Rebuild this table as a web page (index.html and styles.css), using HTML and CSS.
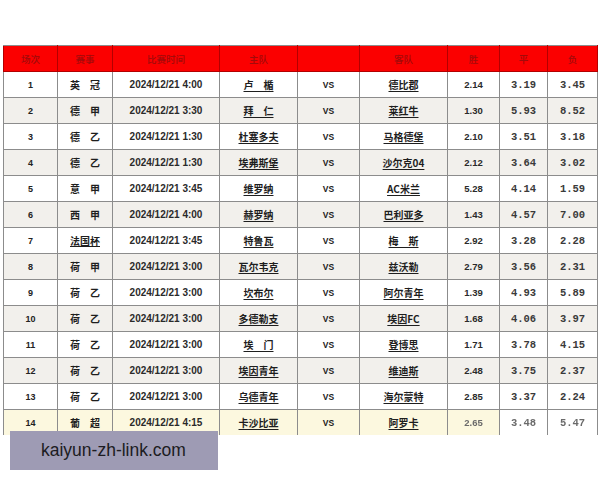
FILE: index.html
```html
<!DOCTYPE html>
<html lang="zh-CN">
<head>
<meta charset="utf-8">
<title>赛事赔率</title>
<link rel="stylesheet" href="styles.css">
</head>
<body>
<div class="page">
  <div class="sheet">
    <table class="odds">
      <colgroup>
        <col class="c-no"><col class="c-lg"><col class="c-dt"><col class="c-home"><col class="c-vs"><col class="c-away"><col class="c-w"><col class="c-d"><col class="c-l">
      </colgroup>
      <thead>
        <tr class="head">
          <th>场次</th><th>赛事</th><th>比赛时间</th><th>主队</th><th></th><th>客队</th><th>胜</th><th>平</th><th>负</th>
        </tr>
      </thead>
      <tbody>
        <tr><td class="no">1</td><td class="lg">英　冠</td><td class="dt">2024/12/21 4:00</td><td class="tm">卢　楯</td><td class="vs">VS</td><td class="tm">德比郡</td><td class="w">2.14</td><td class="mono">3.19</td><td class="mono">3.45</td></tr>
        <tr class="alt"><td class="no">2</td><td class="lg">德　甲</td><td class="dt">2024/12/21 3:30</td><td class="tm">拜　仁</td><td class="vs">VS</td><td class="tm">莱红牛</td><td class="w">1.30</td><td class="mono">5.93</td><td class="mono">8.52</td></tr>
        <tr><td class="no">3</td><td class="lg">德　乙</td><td class="dt">2024/12/21 1:30</td><td class="tm">杜塞多夫</td><td class="vs">VS</td><td class="tm">马格德堡</td><td class="w">2.10</td><td class="mono">3.51</td><td class="mono">3.18</td></tr>
        <tr class="alt"><td class="no">4</td><td class="lg">德　乙</td><td class="dt">2024/12/21 1:30</td><td class="tm">埃弗斯堡</td><td class="vs">VS</td><td class="tm">沙尔克04</td><td class="w">2.12</td><td class="mono">3.64</td><td class="mono">3.02</td></tr>
        <tr><td class="no">5</td><td class="lg">意　甲</td><td class="dt">2024/12/21 3:45</td><td class="tm">维罗纳</td><td class="vs">VS</td><td class="tm">AC米兰</td><td class="w">5.28</td><td class="mono">4.14</td><td class="mono">1.59</td></tr>
        <tr class="alt"><td class="no">6</td><td class="lg">西　甲</td><td class="dt">2024/12/21 4:00</td><td class="tm">赫罗纳</td><td class="vs">VS</td><td class="tm">巴利亚多</td><td class="w">1.43</td><td class="mono">4.57</td><td class="mono">7.00</td></tr>
        <tr><td class="no">7</td><td class="lg u">法国杯</td><td class="dt">2024/12/21 3:45</td><td class="tm">特鲁瓦</td><td class="vs">VS</td><td class="tm">梅　斯</td><td class="w">2.92</td><td class="mono">3.28</td><td class="mono">2.28</td></tr>
        <tr class="alt"><td class="no">8</td><td class="lg">荷　甲</td><td class="dt">2024/12/21 3:00</td><td class="tm">瓦尔韦克</td><td class="vs">VS</td><td class="tm">兹沃勒</td><td class="w">2.79</td><td class="mono">3.56</td><td class="mono">2.31</td></tr>
        <tr><td class="no">9</td><td class="lg">荷　乙</td><td class="dt">2024/12/21 3:00</td><td class="tm">坎布尔</td><td class="vs">VS</td><td class="tm">阿尔青年</td><td class="w">1.39</td><td class="mono">4.93</td><td class="mono">5.89</td></tr>
        <tr class="alt"><td class="no">10</td><td class="lg">荷　乙</td><td class="dt">2024/12/21 3:00</td><td class="tm">多德勒支</td><td class="vs">VS</td><td class="tm">埃因FC</td><td class="w">1.68</td><td class="mono">4.06</td><td class="mono">3.97</td></tr>
        <tr><td class="no">11</td><td class="lg">荷　乙</td><td class="dt">2024/12/21 3:00</td><td class="tm">埃　门</td><td class="vs">VS</td><td class="tm">登博思</td><td class="w">1.71</td><td class="mono">3.78</td><td class="mono">4.15</td></tr>
        <tr class="alt"><td class="no">12</td><td class="lg">荷　乙</td><td class="dt">2024/12/21 3:00</td><td class="tm">埃因青年</td><td class="vs">VS</td><td class="tm">维迪斯</td><td class="w">2.48</td><td class="mono">3.75</td><td class="mono">2.37</td></tr>
        <tr><td class="no">13</td><td class="lg">荷　乙</td><td class="dt">2024/12/21 3:00</td><td class="tm">乌德青年</td><td class="vs">VS</td><td class="tm">海尔蒙特</td><td class="w">2.85</td><td class="mono">3.37</td><td class="mono">2.24</td></tr>
        <tr class="last"><td class="no">14</td><td class="lg">葡　超</td><td class="dt">2024/12/21 4:15</td><td class="tm">卡沙比亚</td><td class="vs">VS</td><td class="tm">阿罗卡</td><td class="w faded">2.65</td><td class="mono faded white">3.48</td><td class="mono faded white">5.47</td></tr>
      </tbody>
    </table>
  </div>
  <div class="watermark">kaiyun-zh-link.com</div>
</div>
</body>
</html>
```

FILE: styles.css
```css
html, body {
  margin: 0;
  padding: 0;
  background: #ffffff;
}

.page {
  position: relative;
  width: 600px;
  height: 480px;
  overflow: hidden;
  font-family: "Liberation Sans", "Noto Sans CJK SC", sans-serif;
}

.sheet {
  padding: 45px 0 0 3px;
  height: 390px;
  overflow: hidden;
}

.odds {
  border-collapse: collapse;
  table-layout: fixed;
  width: 594px;
}

.c-no { width: 54px; }
.c-lg { width: 55px; }
.c-dt { width: 107px; }
.c-home { width: 78px; }
.c-vs { width: 62px; }
.c-away { width: 88px; }
.c-w { width: 52px; }
.c-d { width: 48px; }
.c-l { width: 50px; }

.odds tr { height: 26px; }

.odds th,
.odds td {
  border: 1px solid #8c8c8c;
  padding: 0;
  text-align: center;
  vertical-align: middle;
  white-space: nowrap;
  overflow: hidden;
}

.head th {
  background: #fb0000;
  color: #a30a0a;
  font-family: "Noto Sans CJK SC", sans-serif;
  font-weight: 500;
  font-size: 9.5px;
  border-color: #b30000;
  border-top-color: #8c8c8c;
}

.odds tbody tr { background: #ffffff; }
.odds tbody tr.alt { background: #f2f0ec; }
.odds tbody tr.last { background: #fcf8df; }
.odds tbody tr.last td { border-bottom: none; }

.no {
  font-weight: 700;
  font-size: 9px;
  color: #222;
}

.lg {
  font-family: "Noto Sans CJK SC", sans-serif;
  font-weight: 700;
  font-size: 10px;
  color: #1e1e1e;
}

.u { text-decoration: underline; }

.dt {
  font-weight: 700;
  font-size: 10px;
  color: #2a2a2a;
}

.tm {
  font-family: "Noto Sans CJK SC", sans-serif;
  font-weight: 700;
  font-size: 10px;
  color: #1e1e1e;
  text-decoration: underline;
  text-underline-offset: 2px;
}

.vs {
  font-weight: 700;
  font-size: 8.5px;
  color: #222;
  padding-right: 4px;
}

.w {
  font-weight: 700;
  font-size: 9.5px;
  color: #2a2a2a;
}

.mono {
  font-family: "Liberation Mono", monospace;
  font-weight: 700;
  font-size: 10.5px;
  color: #3a3a3a;
  text-align: right;
  padding-right: 9px;
}

.faded {
  color: #6a6a6a;
  filter: blur(0.5px);
}

.odds tbody tr.last td.white { background: #ffffff; }

.watermark {
  position: absolute;
  left: 10px;
  top: 431px;
  width: 208px;
  height: 39px;
  background: #9e9bb4;
  color: #1c1c22;
  font-family: "Liberation Sans", sans-serif;
  font-size: 17.5px;
  line-height: 39px;
  padding-left: 31px;
  box-sizing: border-box;
}
```
